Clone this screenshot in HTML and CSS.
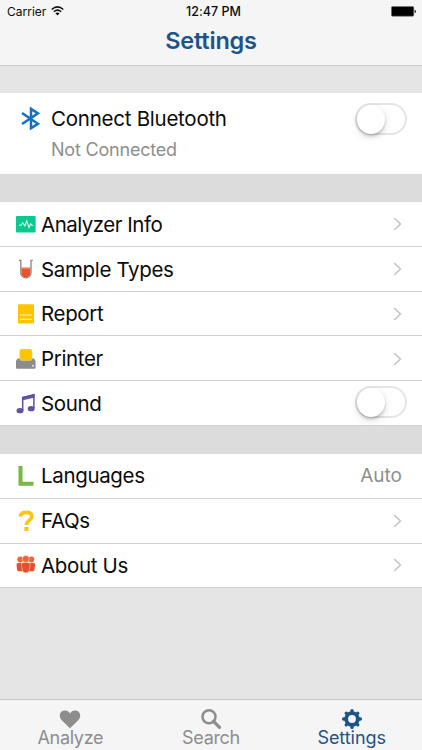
FILE: index.html
```html
<!DOCTYPE html>
<html lang="en">
<head>
<meta charset="utf-8">
<title>Settings</title>
<link rel="stylesheet" href="styles.css">
</head>
<body>
<div class="screen">
  <header class="top">
    <div class="status">
      <div class="carrier"><span>Carrier</span>
        <svg width="13" height="10" viewBox="0 0 13 10"><g fill="none" stroke="#111" stroke-width="1.5"><path d="M.7 3.5Q6.5-1.7 12.3 3.5"/><path d="M2.8 5.8Q6.5 2.5 10.2 5.8"/></g><path d="M4.4 7.3Q6.5 5.6 8.6 7.3L6.5 9.5z" fill="#111"/></svg>
      </div>
      <div class="clock">12:47 PM</div>
      <div class="battery"><svg width="26" height="11" viewBox="0 0 26 11"><rect x=".4" y=".6" width="22.4" height="9.6" rx="1.2" fill="#000" stroke="#777" stroke-width=".6"/><path d="M23.6 3.8q1.4.1 1.4 1.6t-1.4 1.6z" fill="#222"/></svg></div>
    </div>
    <h1>Settings</h1>
  </header>

  <section class="bluetooth">
    <svg class="bt-icon" width="20" height="26" viewBox="0 0 20 26"><path d="M2 7 18 17.800 11 22.300V2.900L18 7.400 2 18" fill="none" stroke="#176fbe" stroke-width="2.500"/></svg>
    <div class="bt-text"><div class="bt-title">Connect Bluetooth</div><div class="bt-state">Not Connected</div></div>
    <div class="switch"><i></i></div>
  </section>

  <section class="group">
    <div class="row"><svg class="icon" viewBox="0 0 20 22"><rect y="3" width="19.6" height="16.4" rx="1" fill="#09c890"/><path d="M3 12.2h2.1l1.6-2.5 2.1 3.2 2-5.1 2.2 6.8 1.8-3.8 1 1.4h1.4" fill="none" stroke="#d9fff0" stroke-width="1.1"/></svg><span class="tight">Analyzer Info</span><svg class="chev" viewBox="0 0 9 14"><path d="m1.2 1 6.2 6-6.2 6"/></svg></div>
    <div class="row"><svg class="icon" viewBox="0 0 20 22"><path d="M5.5 9.7h8.8v5.2a4.4 4.4 0 0 1-8.8 0z" fill="#ef5126"/><path d="M5.5 9.6h8.8v1.6H5.5z" fill="#f47b50"/><path d="M3 2.3h1.800v12.5a5.100 5.100 0 0 0 10.200 0V2.3h1.800" fill="none" stroke="#8b8280" stroke-width="1.3"/></svg><span>Sample Types</span><svg class="chev" viewBox="0 0 9 14"><path d="m1.2 1 6.2 6-6.2 6"/></svg></div>
    <div class="row"><svg class="icon" viewBox="0 0 20 22"><rect x="2" y="1.2" width="16" height="19.4" rx="1.2" fill="#ffc400"/><path d="M4 12h12M4 16.4h12" stroke="#fff3b8" stroke-width="1.1"/></svg><span>Report</span><svg class="chev" viewBox="0 0 9 14"><path d="m1.2 1 6.2 6-6.2 6"/></svg></div>
    <div class="row"><svg class="icon" viewBox="0 0 20 22"><path d="M1.500 10.400h16.600l1.500 2.600v6.700q0 1-1 1H1q-1 0-1-1V13z" fill="#8c8c8c"/><rect x="3.700" y="1" width="12.400" height="11.600" rx="2" fill="#ffc400" stroke="#e8dcb0" stroke-width=".5"/><circle cx="17" cy="17.800" r="1" fill="#eee"/></svg><span>Printer</span><svg class="chev" viewBox="0 0 9 14"><path d="m1.2 1 6.2 6-6.2 6"/></svg></div>
    <div class="row sound"><svg class="icon" viewBox="0 0 20 22"><path d="M6.700 17.500V4.500l11.200-2.700V15" fill="none" stroke="#6052a0" stroke-width="1.500"/><path d="m6 4 12.600-3v3.600L6 7.600z" fill="#6052a0"/><ellipse cx="4" cy="17.700" rx="3.500" ry="2.600" fill="#6052a0"/><ellipse cx="15.200" cy="15.700" rx="3.500" ry="2.600" fill="#6052a0"/></svg><span>Sound</span><div class="switch"><i></i></div></div>
  </section>

  <section class="group second">
    <div class="row"><svg class="icon" viewBox="0 0 20 22"><path d="M4.500 1v17.800h13" fill="none" stroke="#74b943" stroke-width="4"/></svg><span>Languages</span><em>Auto</em></div>
    <div class="row"><svg class="icon" viewBox="0 0 20 22"><path d="M4.300 6.500C4.800 3.600 6.800 2.400 10 2.400c3.800 0 5.800 1.500 5.800 4 0 4-5.400 4-5.400 8.600" fill="none" stroke="#fdc416" stroke-width="3.700"/><rect x="8.300" y="17" width="4.200" height="4" fill="#fdc416"/></svg><span>FAQs</span><svg class="chev" viewBox="0 0 9 14"><path d="m1.2 1 6.2 6-6.2 6"/></svg></div>
    <div class="row"><svg class="icon" viewBox="0 0 20 22"><g fill="#f0633a"><circle cx="4.200" cy="5.500" r="2.900"/><circle cx="15.400" cy="5.500" r="2.900"/></g><g fill="#e4502d"><path d="M2.200 9h3.200l1.400 8.300H2.500Q1.400 17.300 1.200 16L.5 11Q.4 9 2.200 9zM17.400 9h-3.200l-1.400 8.300h4.300q1.100 0 1.300-1.300l.7-5Q19.200 9 17.400 9z"/><path d="M6.300 8.900q3.500-1.400 7 0 1.200.4.900 2l-1.300 6.900q-3.100 2.200-6.200 0l-1.300-6.900Q5.100 9.300 6.300 8.900z" stroke="#fbd0c2" stroke-width=".5"/></g><circle cx="9.800" cy="4.900" r="3.500" fill="#f0633a" stroke="#fff" stroke-width=".4"/></svg><span>About Us</span><svg class="chev" viewBox="0 0 9 14"><path d="m1.2 1 6.2 6-6.2 6"/></svg></div>
  </section>

  <nav class="tabs">
    <div class="tab"><svg viewBox="0 0 22 22"><path d="M11 20.300 3 12.400C-1.200 8 1.100 2.500 5.800 2.500c2.500 0 4.200 1.300 5.200 3 1-1.700 2.700-3 5.200-3 4.700 0 7 5.500 2.800 9.900z" fill="#8d8d8d"/></svg><span>Analyze</span></div>
    <div class="tab"><svg viewBox="0 0 22 22"><circle cx="9" cy="8.700" r="6.500" fill="none" stroke="#8d8d8d" stroke-width="2.500"/><path d="m13.500 13.300 6 6" stroke="#8d8d8d" stroke-width="3.200" stroke-linecap="round"/></svg><span>Search</span></div>
    <div class="tab active"><svg viewBox="0 0 22 22"><g stroke="#1d5488" stroke-width="3.300" stroke-linecap="round"><path d="M11 2.600v16.800M2.600 11h16.800M5.200 5.200l11.600 11.600M16.800 5.200 5.200 16.800"/></g><circle cx="11" cy="11" r="7.700" fill="#1d5488"/><circle cx="11" cy="11" r="3.900" fill="#f5f5f5"/></svg><span>Settings</span></div>
  </nav>
</div>
</body>
</html>
```
FILE: styles.css
```css
* { box-sizing: border-box; }
body { margin: 0; font-family: Inter, "Liberation Sans", sans-serif; color: #0b0b0b; }
svg { display: block; flex: none; }
.screen { width: 422px; height: 750px; background: #e5e5e5; display: flex; flex-direction: column; overflow: hidden; }
.top { height: 66px; background: #f5f5f5; border-bottom: 1px solid #c9c9c9; }
.status { height: 22px; display: grid; grid-template-columns: 1fr 1fr 1fr; align-items: center; font-size: 12px; padding: 0 5px 0 7px; }
.carrier { display: flex; gap: 5px; align-items: center; }
.clock { text-align: center; font-weight: 500; font-size: 12.500px; padding-left: 3px; letter-spacing: .050px; }
.battery { display: flex; justify-content: flex-end; }
h1 { margin: 4px 0 0; font-size: 23.500px; line-height: 30px; font-weight: 600; text-align: center; color: #1d5488; letter-spacing: -.200px; }
.bluetooth { margin-top: 27px; height: 81px; background: #fff; display: flex; align-items: flex-start; padding: 11px 15px 0 20px; }
.bt-icon { margin: 2px 11px 0 0; }
.bt-text { flex: 1; white-space: nowrap; }
.bt-title { font-size: 20.500px; line-height: 30px; letter-spacing: -.250px; }
.bt-state { font-size: 18px; line-height: 32px; color: #8e8e8e; letter-spacing: -.200px; }
.switch { width: 52px; height: 32px; border: 2px solid #e5e5e5; border-radius: 16px; background: #fff; flex: none; }
.switch i { display: block; width: 28px; height: 29px; margin: -.500px 0 0 0; border-radius: 50%; background: #fff; box-shadow: 0 2px 3px #0003, 0 3px 8px #0002; }
.bluetooth .switch { margin-top: -1px; }
.group { background: #fff; border-top: 28px solid #dcdcdc; }
.row { height: 44.800px; border-bottom: 1px solid #d0d0d0; display: flex; align-items: center; padding: 1px 20px 0 16px; font-size: 20.500px; letter-spacing: -.350px; }
.second .row { padding-top: 0; }
.icon { width: 20px; height: 22px; margin-right: 5px; }
.row span { flex: 1; white-space: nowrap; }
.row .tight { letter-spacing: -.500px; }
.row em { font-style: normal; font-size: 19px; color: #8e8e8e; letter-spacing: 0; }
.chev { width: 9px; height: 14px; fill: none; stroke: #c5c5ca; stroke-width: 1.600; }
.sound { padding-right: 15px; }
.sound .switch { margin-top: -3px; }
.tabs { margin-top: auto; height: 51px; background: #f5f5f5; border-top: 1px solid #c7c7c7; display: grid; grid-template-columns: repeat(3, 1fr); }
.tab { display: flex; flex-direction: column; align-items: center; padding-top: 8px; color: #8d8d8d; font-size: 18px; line-height: 20px; letter-spacing: -.300px; }
.tab svg { width: 22px; height: 22px; margin-bottom: -2px; }
.active { color: #1d5488; letter-spacing: -.050px; }
```
